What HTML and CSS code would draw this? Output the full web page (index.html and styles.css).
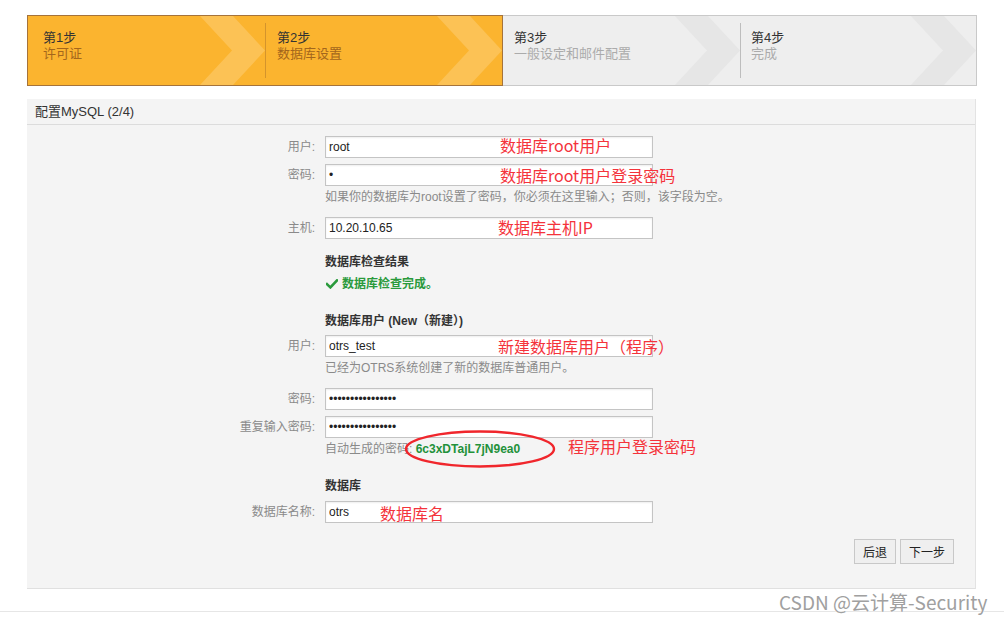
FILE: index.html
```html
<!DOCTYPE html>
<html lang="zh">
<head>
<meta charset="utf-8">
<title>配置MySQL</title>
<link rel="stylesheet" href="styles.css">
</head>
<body>
<div class="page">
  <div class="steps">
    <div class="step done s1">
      <div class="step-t">第1步</div>
      <div class="step-s">许可证</div>
      <svg class="chev" viewBox="0 0 65 69" preserveAspectRatio="none"><polygon points="0,0 33,0 65,34.5 33,69 0,69 32,34.5"/></svg>
    </div>
    <div class="step done s2 sep">
      <div class="step-t">第2步</div>
      <div class="step-s">数据库设置</div>
      <svg class="chev" viewBox="0 0 65 69" preserveAspectRatio="none"><polygon points="0,0 33,0 65,34.5 33,69 0,69 32,34.5"/></svg>
    </div>
    <div class="step todo s3">
      <div class="step-t">第3步</div>
      <div class="step-s">一般设定和邮件配置</div>
      <svg class="chev" viewBox="0 0 65 69" preserveAspectRatio="none"><polygon points="0,0 33,0 65,34.5 33,69 0,69 32,34.5"/></svg>
    </div>
    <div class="step todo s4 sep">
      <div class="step-t">第4步</div>
      <div class="step-s">完成</div>
      <svg class="chev" viewBox="0 0 65 69" preserveAspectRatio="none"><polygon points="0,0 33,0 65,34.5 33,69 0,69 32,34.5"/></svg>
    </div>
  </div>

  <div class="panel">
    <div class="panel-h">配置MySQL (2/4)</div>
    <div class="form">
      <div class="row m-first">
        <label class="lbl">用户:</label>
        <div class="field"><input class="inp" type="text" value="root"><span class="anno a-root">数据库root用户</span></div>
      </div>
      <div class="row m6">
        <label class="lbl">密码:</label>
        <div class="field"><input class="inp" type="password" value="x"><span class="anno a-root2">数据库root用户登录密码</span></div>
      </div>
      <div class="note hint m3">如果你的数据库为root设置了密码，你必须在这里输入；否则，该字段为空。</div>
      <div class="row m12">
        <label class="lbl">主机:</label>
        <div class="field"><input class="inp" type="text" value="10.20.10.65"><span class="anno a-host">数据库主机IP</span></div>
      </div>

      <div class="note heading m15">数据库检查结果</div>
      <div class="note ok m6"><svg class="check" viewBox="0 0 12 10"><path d="M1 5.2 L4.4 8.4 L11 1.4"/></svg>数据库检查完成。</div>

      <div class="note heading m21">数据库用户 (New（新建）)</div>
      <div class="row m6">
        <label class="lbl">用户:</label>
        <div class="field"><input class="inp" type="text" value="otrs_test"><span class="anno a-new">新建数据库用户（程序）</span></div>
      </div>
      <div class="note hint m3">已经为OTRS系统创建了新的数据库普通用户。</div>
      <div class="row m12">
        <label class="lbl">密码:</label>
        <div class="field"><input class="inp" type="password" value="xxxxxxxxxxxxxxxx"></div>
      </div>
      <div class="row m6">
        <label class="lbl">重复输入密码:</label>
        <div class="field"><input class="inp" type="password" value="xxxxxxxxxxxxxxxx"></div>
      </div>
      <div class="note hint gen m3">自动生成的密码: <b class="pw">6c3xDTajL7jN9ea0</b>
        <svg class="ring" viewBox="0 0 154 40"><ellipse cx="77" cy="20" rx="74" ry="17.5"/></svg>
        <span class="anno a-pw">程序用户登录密码</span>
      </div>

      <div class="note heading m21">数据库</div>
      <div class="row m7">
        <label class="lbl">数据库名称:</label>
        <div class="field"><input class="inp" type="text" value="otrs"><span class="anno a-db">数据库名</span></div>
      </div>

      <div class="actions">
        <button class="btn b-back" type="button">后退</button>
        <button class="btn b-next" type="button">下一步</button>
      </div>
    </div>
  </div>
</div>
<div class="footer"></div>
<div class="watermark">CSDN @云计算-Security</div>
</body>
</html>
```

FILE: styles.css
```css
* { box-sizing: border-box; }
html, body {
  margin: 0;
  padding: 0;
  background: #ffffff;
}
body {
  font-family: "Liberation Sans", "Noto Sans CJK SC", sans-serif;
  font-size: 12px;
  color: #333;
  position: relative;
  min-height: 623px;
}
.page {
  padding: 15px 0 0 27px;
}

/* ---------- steps ---------- */
.steps {
  display: flex;
  width: 950px;
  height: 71px;
}
.step {
  position: relative;
  height: 71px;
  padding: 14px 0 0 11px;
  overflow: hidden;
}
.step.done {
  background: #fbb42f;
  border-top: 1px solid #a5733b;
  border-bottom: 1px solid #a5733b;
}
.step.todo {
  background: #eeeeee;
  border-top: 1px solid #c9c9c9;
  border-bottom: 1px solid #c9c9c9;
}
.s1 { width: 238px; border-left: 1px solid #a5733b; padding-left: 15px; }
.s2 { width: 238px; border-right: 1px solid #a5733b; padding-left: 12px; }
.s3 { width: 237px; }
.s4 { width: 237px; border-right: 1px solid #c9c9c9; }
.step.sep::before {
  content: "";
  position: absolute;
  left: 0;
  top: 7px;
  height: 55px;
  width: 1px;
}
.step.done.sep::before { background: #d4942c; }
.step.todo.sep::before { background: #bdbdbd; }
.step-t {
  position: relative;
  z-index: 1;
  font-size: 13px;
  line-height: 16px;
  color: #333;
}
.step-s {
  position: relative;
  z-index: 1;
  font-size: 13px;
  line-height: 16px;
}
.done .step-s { color: #a3661c; }
.todo .step-s { color: #ababab; }
.chev {
  position: absolute;
  right: 0;
  top: 0;
  width: 65px;
  height: 69px;
}
.done .chev polygon { fill: #fcc255; }
.todo .chev polygon { fill: #e6e6e6; }

/* ---------- panel ---------- */
.panel {
  margin-top: 13px;
  width: 949px;
  background: #f4f4f4;
  border-right: 1px solid #e3e3e3;
  border-bottom: 1px solid #e0e0e0;
}
.panel-h {
  height: 26px;
  line-height: 25px;
  padding-left: 8px;
  font-size: 13px;
  color: #333;
  border-bottom: 1px solid #dcdcdc;
}
.form {
  display: flex;
  flex-direction: column;
  padding: 11px 0 24px 0;
}
.row {
  display: grid;
  grid-template-columns: 288px 328px;
  column-gap: 10px;
  align-items: center;
}
.lbl {
  text-align: right;
  color: #8a8a8a;
  line-height: 22px;
  font-size: 12px;
}
.field {
  position: relative;
  height: 22px;
}
.inp {
  display: block;
  width: 328px;
  height: 22px;
  margin: 0;
  padding: 0 3px;
  border: 1px solid #c4c4c4;
  background: #fff;
  box-shadow: inset 0 1px 2px rgba(0, 0, 0, 0.07);
  font-family: "Liberation Sans", "Noto Sans CJK SC", sans-serif;
  font-size: 12px;
  color: #222;
  outline: none;
}
.note {
  margin-left: 298px;
  position: relative;
}
.hint {
  line-height: 16px;
  color: #8a8a8a;
}
.heading {
  line-height: 16px;
  font-weight: bold;
  color: #333;
}
.ok {
  line-height: 16px;
  color: #2a9a3c;
  font-weight: bold;
  display: flex;
  align-items: center;
}
.check {
  width: 12px;
  height: 10px;
  margin: 0 4px 0 1px;
}
.check path {
  fill: none;
  stroke: #2a9a3c;
  stroke-width: 2.6;
  stroke-linecap: square;
}
.pw {
  color: #23913a;
  font-weight: bold;
}
.ring {
  position: absolute;
  left: 78px;
  top: -12px;
  width: 154px;
  height: 40px;
  overflow: visible;
}
.ring ellipse {
  fill: none;
  stroke: #f0262c;
  stroke-width: 2.4;
}

/* margins between rows */
.m3 { margin-top: 3px; }
.m6 { margin-top: 6px; }
.m7 { margin-top: 7px; }
.m12 { margin-top: 12px; }
.m15 { margin-top: 15px; }
.m21 { margin-top: 21px; }

/* red annotations over the screenshot */
.anno {
  position: absolute;
  white-space: nowrap;
  font-family: "Noto Sans CJK SC", "Liberation Sans", sans-serif;
  font-size: 16px;
  line-height: 20px;
  color: #f4333b;
  pointer-events: none;
}
.a-root { left: 175px; top: -1px; }
.a-root2 { left: 175px; top: 1px; }
.a-host { left: 173px; top: 0; }
.a-new { left: 173px; top: 1px; }
.a-db { left: 55px; top: 2px; }
.a-pw { left: 243px; top: -5px; }

/* buttons */
.actions {
  display: flex;
  justify-content: flex-end;
  gap: 4px;
  margin-top: 16px;
  padding-right: 21px;
}
.btn {
  height: 25px;
  margin: 0;
  padding: 0;
  border: 1px solid #c8c8c8;
  background: #efefef;
  font-family: "Liberation Sans", "Noto Sans CJK SC", sans-serif;
  font-size: 12px;
  color: #222;
}
.b-back { width: 42px; }
.b-next { width: 54px; }

/* footer + watermark */
.footer {
  margin-top: 22px;
  border-top: 1px solid #e6e6e6;
  height: 12px;
}
.watermark {
  position: absolute;
  left: 779px;
  top: 589px;
  font-family: "Noto Sans CJK SC", "Liberation Sans", sans-serif;
  font-size: 19px;
  line-height: 26px;
  color: #a0a0a0;
  text-shadow: 0 0 2px #ffffff, 0 0 1px #ffffff;
  white-space: nowrap;
}
```
